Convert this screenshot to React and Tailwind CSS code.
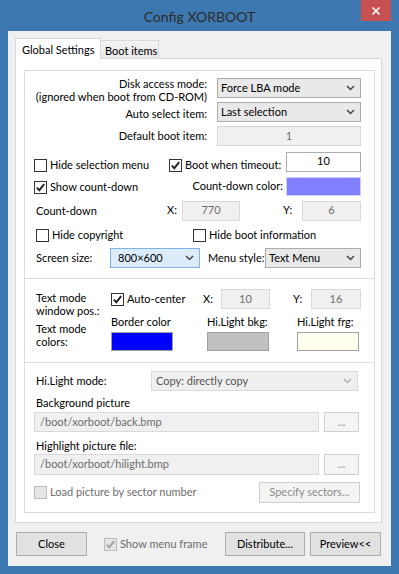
import React from 'react';

// small win8-ish form controls
const Check = ({ checked, disabled }) => (
  <span
    className={
      'flex h-[13px] w-[13px] shrink-0 items-center justify-center border ' +
      (disabled ? 'border-[#bcbcbc] bg-[#e6e6e6]' : 'border-[#333333] bg-white')
    }
  >
    {checked && (
      <svg width="11" height="11" viewBox="0 0 11 11">
        <path d="M1.8 5.6 L4.3 8.2 L9.2 2.2" fill="none" stroke={disabled ? '#a0a0a0' : '#222222'} strokeWidth="1.9" />
      </svg>
    )}
  </span>
);

const CheckLabel = ({ label, checked, disabled, className = '' }) => (
  <div className={'flex items-center gap-[3px] ' + className}>
    <Check checked={checked} disabled={disabled} />
    <span className={disabled ? 'text-[#6d6d6d]' : ''}>{label}</span>
  </div>
);

const Chevron = ({ color = '#444444' }) => (
  <svg width="9" height="6" viewBox="0 0 9 6" className="shrink-0">
    <path d="M1 1 L4.5 4.5 L8 1" fill="none" stroke={color} strokeWidth="1.5" />
  </svg>
);

const Select = ({ value, className = '', variant = 'normal' }) => {
  const look = {
    normal: 'border-[#acacac] bg-[#e9e9e9] text-black',
    focus: 'border-[#7eb4ea] bg-[#dcecfc] text-black',
    disabled: 'border-[#d9d9d9] bg-[#efefef] text-[#6d6d6d]',
  };
  return (
    <div className={'flex h-[20px] items-center justify-between border pl-[3px] pr-[5px] ' + look[variant] + ' ' + className}>
      <span>{value}</span>
      <Chevron color={variant === 'disabled' ? '#b0b0b0' : '#444444'} />
    </div>
  );
};

const Field = ({ value, className = '', disabled, left }) => (
  <div
    className={
      'flex h-[20px] items-center border ' +
      (left ? 'justify-start pl-[5px] ' : 'justify-center ') +
      (disabled ? 'border-[#d9d9d9] bg-[#f0f0f0] text-[#6d6d6d] ' : 'border-[#abadb3] bg-white text-black ') +
      className
    }
  >
    {value}
  </div>
);

const Button = ({ children, className = '', disabled }) => (
  <div
    className={
      'flex items-center justify-center border ' +
      (disabled ? 'border-[#cfcfcf] bg-[#f4f4f4] text-[#8a8a8a] ' : 'border-[#adadad] bg-[#e1e1e1] text-black ') +
      className
    }
  >
    {children}
  </div>
);

const Swatch = ({ color }) => (
  <div className={'mt-[3px] h-[19px] w-[62px] border border-[#a0a0a0] ' + color} />
);

export default function App() {
  return (
    <div className="flex h-[574px] w-[399px] flex-col whitespace-nowrap bg-[#3c78af] font-['Lato',sans-serif] text-[11px] text-black">
      {/* title bar */}
      <div className="flex h-[31px] shrink-0">
        <div className="w-[38px]" />
        <div className="flex-1 pt-[6px] text-center text-[14px] text-[#2b2b2b]">Config XORBOOT</div>
        <div className="mr-[8px] flex h-[21px] w-[30px] items-center justify-center bg-[#c75050]">
          <svg width="10" height="10" viewBox="0 0 10 10">
            <path d="M1.5 1.5 L8.5 8.5 M8.5 1.5 L1.5 8.5" stroke="#ffffff" strokeWidth="1.6" />
          </svg>
        </div>
      </div>

      {/* client area */}
      <div className="mx-[8px] mb-[8px] flex flex-1 flex-col bg-[#f0f0f0] pl-[7px] pr-[9px] pt-[7px]">
        {/* tab headers */}
        <div className="flex h-[20px] items-end">
          <div className="relative z-10 -mb-[1px] h-[21px] w-[86px] border-x border-t border-[#d9d9d9] bg-white pl-[6px] pt-[3px]">
            Global Settings
          </div>
          <div className="h-[18px] w-[58px] border-r border-t border-[#d9d9d9] bg-gradient-to-b from-[#f3f3f3] to-[#e8e8e8] pl-[4px] pt-[2px]">
            Boot items
          </div>
        </div>

        {/* tab page */}
        <div className="h-[465px] border border-[#d9d9d9] bg-white pb-[9px] pt-[11px]">
          <div className="ml-[8px] flex w-[351px] flex-col divide-y divide-[#dcdcdc] border border-[#dcdcdc]">
            {/* general */}
            <div className="flex h-[208px] flex-col pt-[7px]">
              <div className="flex h-[20px] items-center">
                <div className="mt-[3px] w-[182px] text-right leading-[13px]">
                  Disk access mode:
                  <br />
                  (ignored when boot from CD-ROM)
                </div>
                <Select value="Force LBA mode" className="ml-[10px] w-[144px]" />
              </div>
              <div className="mt-[4px] flex h-[20px] items-center">
                <div className="mt-[4px] w-[182px] text-right">Auto select item:</div>
                <Select value="Last selection" className="ml-[10px] w-[144px]" />
              </div>
              <div className="mt-[4px] flex h-[20px] items-center">
                <div className="w-[182px] text-right">Default boot item:</div>
                <Field value="1" disabled className="ml-[10px] w-[144px]" />
              </div>

              <div className="mt-[6px] flex h-[19px] items-center pl-[9px]">
                <CheckLabel label="Hide selection menu" className="mt-[7px] w-[135px]" />
                <CheckLabel label="Boot when timeout:" checked className="mt-[7px] w-[117px]" />
                <Field value="10" className="h-[19px] w-[75px]" />
              </div>
              <div className="mt-[6px] flex h-[19px] items-center pl-[9px]">
                <CheckLabel label="Show count-down" checked className="mt-[2px] w-[135px]" />
                <div className="w-[117px] pr-[3px] text-right">Count-down color:</div>
                <div className="h-[19px] w-[75px] border border-[#d0d0ff] bg-[#8080ff]" />
              </div>
              <div className="mt-[5px] flex h-[19px] items-center pl-[11px]">
                <div className="mt-[2px] w-[131px]">Count-down</div>
                <div className="w-[15px]">X:</div>
                <Field value="770" disabled className="h-[19px] w-[58px]" />
                <div className="ml-[43px] w-[19px]">Y:</div>
                <Field value="6" disabled className="h-[19px] w-[59px]" />
              </div>
              <div className="mt-[8px] flex h-[14px] items-center pl-[11px]">
                <CheckLabel label="Hide copyright" className="w-[157px]" />
                <CheckLabel label="Hide boot information" />
              </div>
              <div className="mt-[6px] flex h-[20px] items-center pl-[11px]">
                <div className="w-[74px]">Screen size:</div>
                <Select value="800×600" variant="focus" className="w-[90px] pl-[7px]" />
                <div className="ml-[8px] w-[57px]">Menu style:</div>
                <Select value="Text Menu" className="w-[96px]" />
              </div>
            </div>

            {/* text mode */}
            <div className="flex h-[84px] pl-[11px] pt-[10px]">
              <div className="flex w-[75px] flex-col leading-[13px]">
                <div className="mt-[2px]">
                  Text mode
                  <br />
                  window pos.:
                </div>
                <div className="mt-[5px]">
                  Text mode
                  <br />
                  colors:
                </div>
              </div>
              <div className="flex flex-col">
                <div className="flex h-[20px] items-center">
                  <CheckLabel label="Auto-center" checked className="w-[92px]" />
                  <div className="w-[18px]">X:</div>
                  <Field value="10" disabled className="w-[49px]" />
                  <div className="ml-[23px] w-[18px]">Y:</div>
                  <Field value="16" disabled className="w-[50px]" />
                </div>
                <div className="mt-[6px] flex leading-[14px]">
                  <div className="flex w-[96px] flex-col">
                    <span>Border color</span>
                    <Swatch color="bg-[#0000ff]" />
                  </div>
                  <div className="flex w-[90px] flex-col">
                    <span>Hi.Light bkg:</span>
                    <Swatch color="bg-[#c0c0c0]" />
                  </div>
                  <div className="flex flex-col">
                    <span>Hi.Light frg:</span>
                    <Swatch color="bg-[#ffffee]" />
                  </div>
                </div>
              </div>
            </div>

            {/* pictures */}
            <div className="flex h-[149px] flex-col pl-[9px] pt-[8px]">
              <div className="flex h-[20px] items-center">
                <div className="mt-[1px] w-[117px] pl-[2px]">Hi.Light mode:</div>
                <Select value="Copy: directly copy" variant="disabled" className="w-[207px] pl-[4px] text-[#555555]" />
              </div>
              <div className="mt-[5px] pl-[2px] leading-[14px]">Background picture</div>
              <div className="mt-[2px] flex h-[20px]">
                <Field value="/boot/xorboot/back.bmp" disabled left className="w-[285px]" />
                <Button disabled className="ml-[5px] w-[35px]">...</Button>
              </div>
              <div className="mt-[7px] pl-[2px] leading-[14px]">Highlight picture file:</div>
              <div className="mt-[1px] flex h-[21px]">
                <Field value="/boot/xorboot/hilight.bmp" disabled left className="h-[21px] w-[285px]" />
                <Button disabled className="ml-[5px] w-[35px]">...</Button>
              </div>
              <div className="mt-[7px] flex h-[21px] items-center">
                <CheckLabel label="Load picture by sector number" disabled className="w-[225px]" />
                <Button disabled className="h-[21px] w-[101px]">Specify sectors...</Button>
              </div>
            </div>
          </div>
        </div>

        {/* bottom buttons */}
        <div className="mt-[9px] flex h-[24px] items-center">
          <Button className="ml-[1px] h-[24px] w-[71px]">Close</Button>
          <CheckLabel label="Show menu frame" checked disabled className="ml-[17px] w-[121px]" />
          <Button className="h-[24px] w-[80px]">Distribute...</Button>
          <Button className="ml-[5px] h-[24px] w-[71px]">Preview&lt;&lt;</Button>
        </div>
      </div>
    </div>
  );
}
